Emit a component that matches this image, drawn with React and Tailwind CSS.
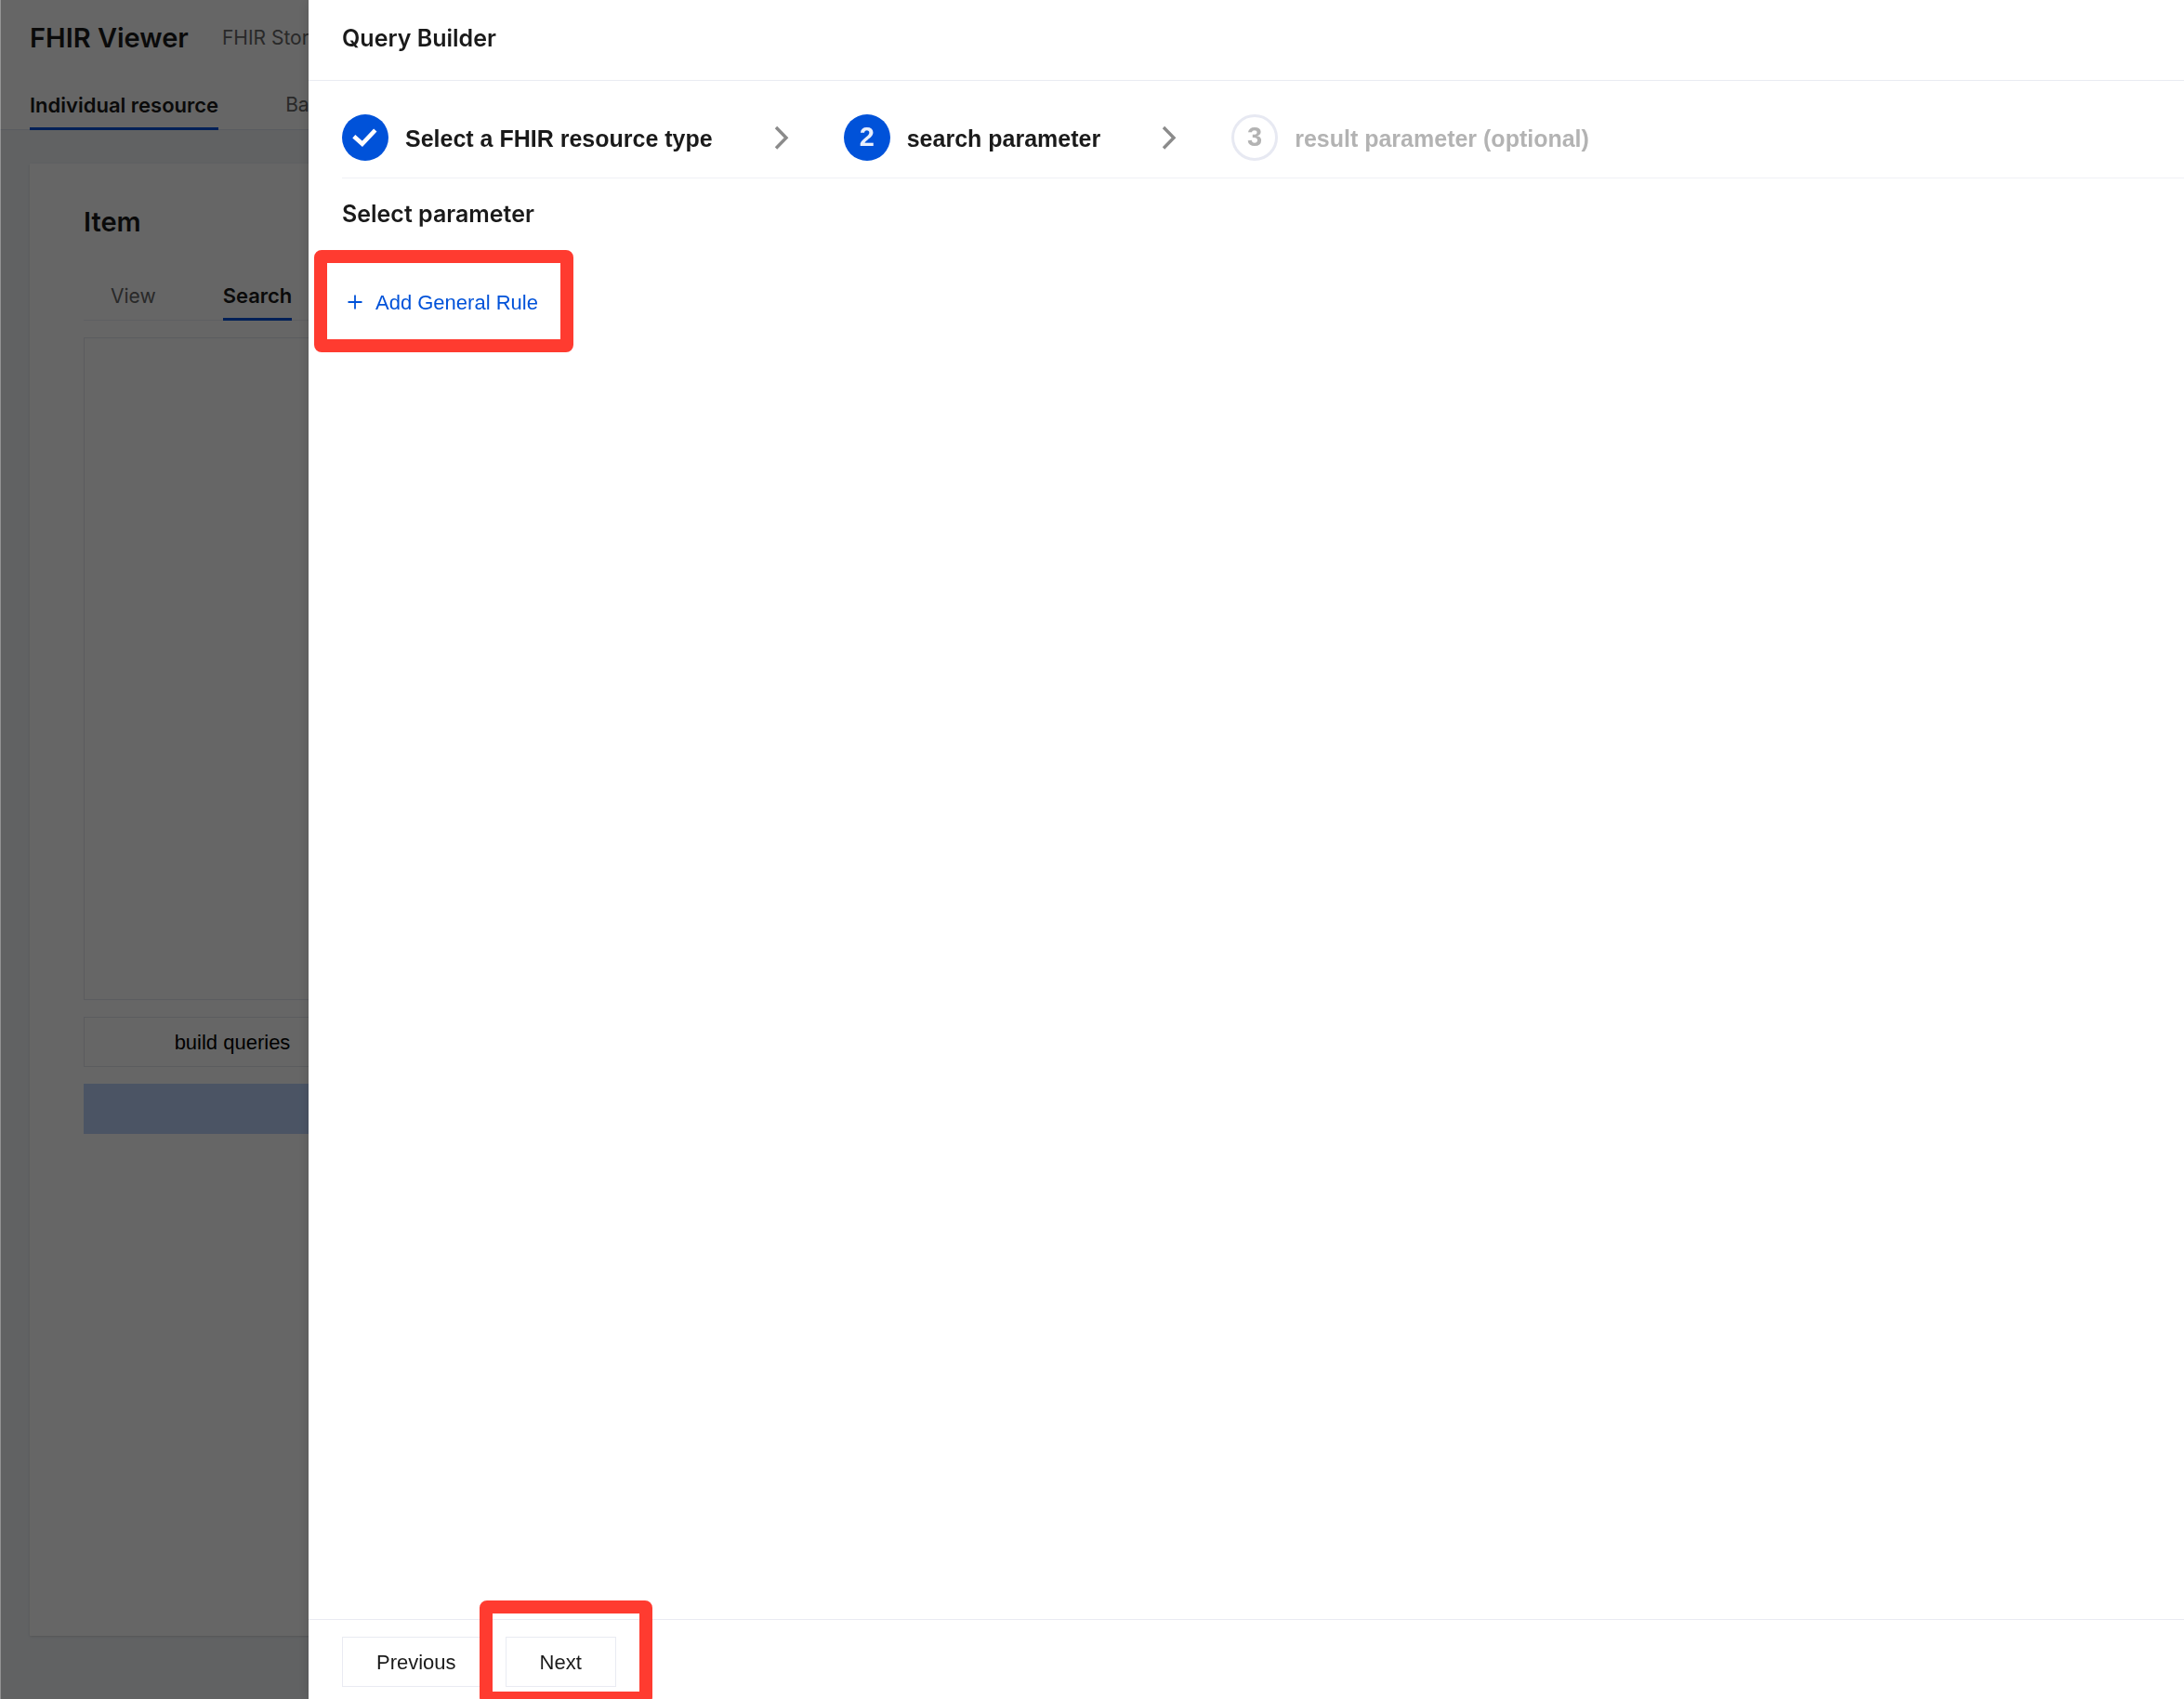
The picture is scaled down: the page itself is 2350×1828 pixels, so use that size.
import { Fragment } from "react";

const steps = [
  { label: "Select a FHIR resource type", state: "done" },
  { label: "search parameter", state: "current" },
  { label: "result parameter (optional)", state: "pending" },
];

function CheckIcon() {
  return (
    <svg aria-hidden="true" width="50" height="50" viewBox="0 0 50 50" fill="none">
      <path d="M12.8 23.8L21.8 31.8L35.8 17" stroke="white" strokeWidth="4.6" />
    </svg>
  );
}

function ChevronIcon() {
  return (
    <svg aria-hidden="true" width="18" height="28" viewBox="0 0 18 28" fill="none">
      <path d="M3 3L14 14.2L3 25.5" stroke="#8b8b8b" strokeWidth="3.4" />
    </svg>
  );
}

function PlusIcon() {
  return (
    <svg aria-hidden="true" width="16" height="16" viewBox="0 0 16 16" fill="none">
      <path d="M8 0.5V15.5M0.5 8H15.5" stroke="#0052d9" strokeWidth="1.8" />
    </svg>
  );
}

function StepMarker({ number, state }) {
  if (state === "done") {
    return (
      <span className="size-[50px] rounded-full bg-[#0052d9]">
        <CheckIcon />
      </span>
    );
  }
  return (
    <span
      className={
        state === "current"
          ? "flex size-[50px] items-center justify-center rounded-full bg-[#0052d9] text-[29px] font-bold text-[#e8effc]"
          : "flex size-[50px] items-center justify-center rounded-full border-3 border-[#e7e9f2] text-[29px] font-bold text-[#b3b3b3]"
      }
    >
      {number}
    </span>
  );
}

function Viewer() {
  return (
    <div className="flex min-h-screen flex-col bg-[#f2f5f8] font-['Inter',sans-serif] text-[#1a1a1a]">
      <header className="h-[140px] border-b border-[#dfe5f0] bg-white px-8">
        <div className="flex h-[82px] items-center gap-9">
          <h1 className="text-[29px] font-semibold">FHIR Viewer</h1>
          <span className="text-[21px] text-[#666]">FHIR Store</span>
        </div>
        <nav className="flex h-[58px] gap-[72px]">
          <button className="border-b-3 border-[#0052d9] pt-2 text-[22px] font-semibold">Individual resource</button>
          <button className="pt-1 text-[21px] text-[#666]">Batch</button>
        </nav>
      </header>
      <main className="mx-8 mt-9 mb-[68px] flex-1 bg-white px-[58px] pt-[43px] shadow-sm">
        <h2 className="text-[29px] leading-10 font-semibold">Item</h2>
        <div className="mt-8 flex h-[54px] w-[660px] gap-[72px] border-b border-[#eceef4] pl-[29px]">
          <button className="pt-0.5 text-[21px] text-[#666]">View</button>
          <button className="-mb-px border-b-3 border-[#0052d9] pt-1 text-[22px] font-semibold">Search</button>
        </div>
        <textarea aria-label="Query" className="mt-[18px] block h-[713px] w-[660px] resize-none border border-[#e3e6ee]" />
        <button className="mt-[18px] block h-[54px] w-80 border border-[#e3e6ee] font-['Liberation_Sans',sans-serif] text-[22px] text-black">
          build queries
        </button>
        <button aria-label="Run query" className="mt-[18px] block h-[54px] w-[660px] bg-[#bbd3fb]" />
      </main>
    </div>
  );
}

function QueryBuilder() {
  return (
    <section
      aria-label="Query Builder"
      className="fixed inset-y-0 right-0 left-[332px] flex flex-col overflow-hidden bg-white font-['Liberation_Sans',sans-serif] text-[#1a1a1a] shadow-[0_0_14px_rgba(0,0,0,0.15)]"
    >
      <header className="flex h-[87px] items-center border-b border-[#e9ebf2] px-9 pb-0.5">
        <h2 className="font-['Inter',sans-serif] text-[25px] font-semibold">Query Builder</h2>
      </header>
      <div className="flex-1 pl-9">
        <ol className="flex h-[105px] items-center border-b border-[#f0f1f5] pt-[18px]">
          {steps.map((step, i) => (
            <Fragment key={step.label}>
              {i > 0 && (
                <li aria-hidden="true" className="mr-[58px] ml-[65px]">
                  <ChevronIcon />
                </li>
              )}
              <li className="flex items-center gap-[18px]">
                <StepMarker number={i + 1} state={step.state} />
                <span
                  className={
                    step.state === "pending" ? "pt-1 text-[25px] font-bold text-[#b3b3b3]" : "pt-1 text-[25px] font-bold"
                  }
                >
                  {step.label}
                </span>
              </li>
            </Fragment>
          ))}
        </ol>
        <h3 className="mt-5 font-['Inter',sans-serif] text-[25px] leading-9 font-semibold">Select parameter</h3>
        <div className="relative mt-[49px] w-fit">
          <button className="flex h-[54px] items-center gap-[14px] pt-0.5 pr-2 pl-1.5 text-[22px] text-[#0052d9]">
            <PlusIcon />
            Add General Rule
          </button>
          <span
            aria-hidden="true"
            className="pointer-events-none absolute -inset-x-[30px] -inset-y-7 rounded-lg border-14 border-[#ff3b30]"
          />
        </div>
      </div>
      <footer className="flex h-[86px] gap-4 border-t border-[#e9ebf2] px-9 pt-[18px] text-[22px]">
        <button className="h-[54px] border border-[#e9ebf2] px-9">Previous</button>
        <div className="relative">
          <button className="h-[54px] border border-[#e9ebf2] px-9">Next</button>
          <span
            aria-hidden="true"
            className="pointer-events-none absolute -top-[39px] -right-[39px] -left-7 h-28 rounded-lg border-14 border-[#ff3b30]"
          />
        </div>
      </footer>
    </section>
  );
}

export default function App() {
  return (
    <>
      <Viewer />
      <div aria-hidden="true" className="fixed inset-0 border-l border-white/30 bg-black/60" />
      <QueryBuilder />
    </>
  );
}
